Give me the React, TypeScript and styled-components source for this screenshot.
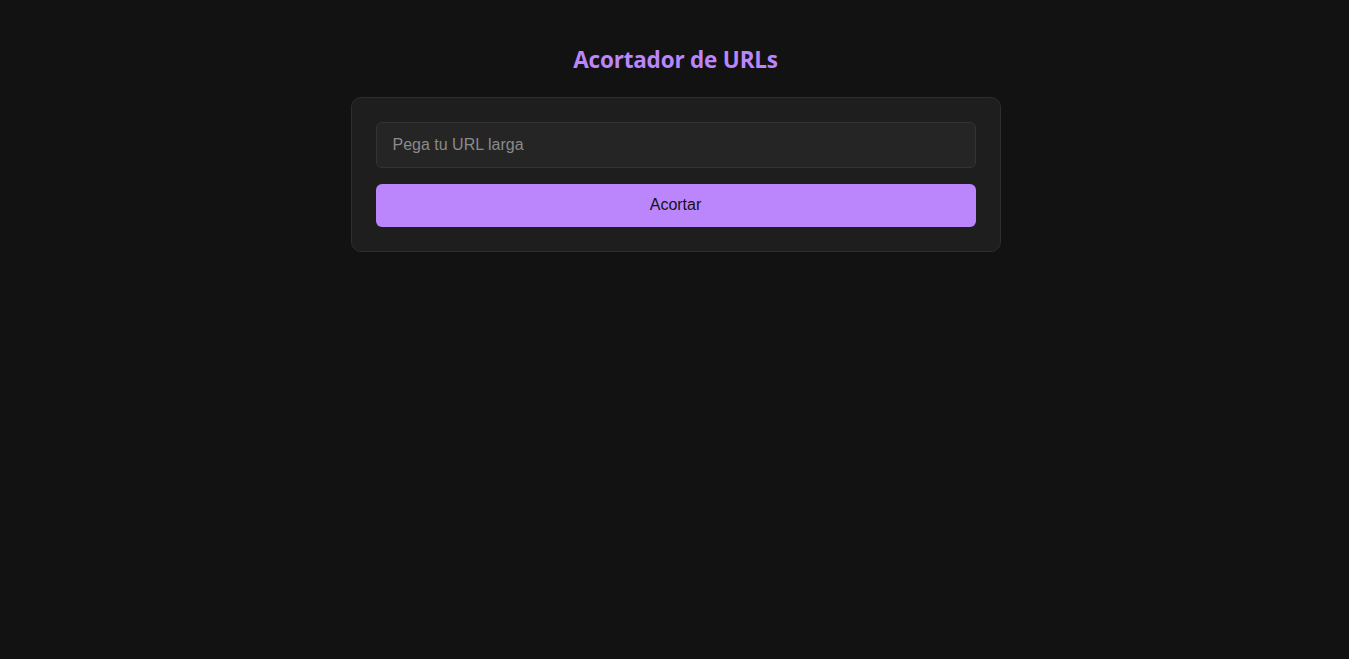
import React from "react";
import styled, { createGlobalStyle } from "styled-components";

const Global = createGlobalStyle`
  html, body { margin: 0; padding: 0; background: #121212; }
  body { font-family: "Liberation Sans", Arial, sans-serif; color: #e0e0e0; min-height: 100vh; }
`;

const Page = styled.main`
  display: flex;
  flex-direction: column;
  align-items: center;
  padding-top: 45px;
  padding-left: 2px;
`;

const Title = styled.h1`
  margin: 0 0 22px;
  font-family: "Open Sans", "Noto Sans", sans-serif;
  font-weight: 700;
  font-size: 22.5px;
  line-height: 30px;
  color: #bb86fc;
  letter-spacing: -0.2px;
`;

const Card = styled.form`
  box-sizing: border-box;
  width: 650px;
  padding: 24px;
  background: #1e1e1e;
  border: 1px solid #2e2e2e;
  border-radius: 10px;
  display: flex;
  flex-direction: column;
  gap: 16px;
`;

const Input = styled.input`
  box-sizing: border-box;
  height: 46px;
  padding: 0 16px;
  background: #252525;
  border: 1px solid #333333;
  border-radius: 6px;
  color: #e0e0e0;
  font-family: "Liberation Sans", Arial, sans-serif;
  font-size: 16px;
  outline: none;
  &::placeholder { color: #8a8a8a; }
`;

const Button = styled.button`
  height: 43px;
  padding: 0 0 2px;
  border: none;
  border-radius: 6px;
  background: #bb86fc;
  color: #121212;
  font-family: "Liberation Sans", Arial, sans-serif;
  font-size: 16px;
  cursor: pointer;
`;

export default function App() {
  return (
    <>
      <Global />
      <Page>
        <Title>Acortador de URLs</Title>
        <Card onSubmit={(e) => e.preventDefault()}>
          <Input placeholder="Pega tu URL larga" />
          <Button type="submit">Acortar</Button>
        </Card>
      </Page>
    </>
  );
}
